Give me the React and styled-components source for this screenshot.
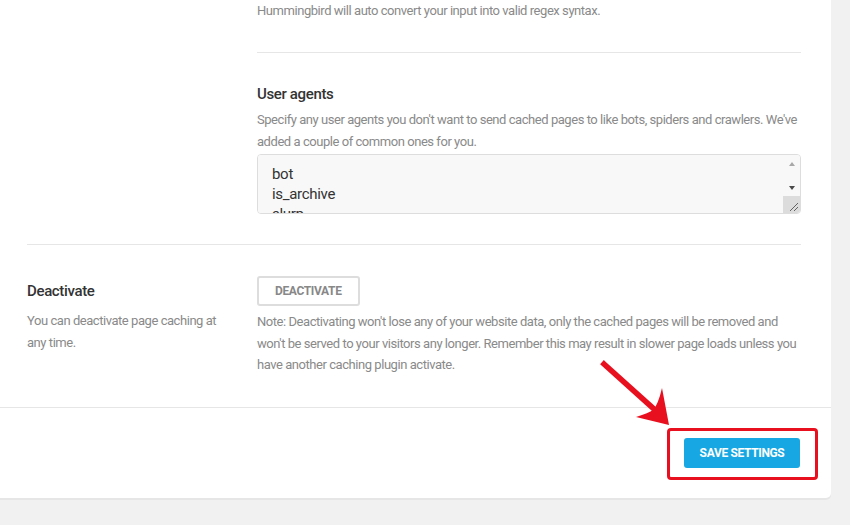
import React from "react";
import styled, { createGlobalStyle } from "styled-components";

const Global = createGlobalStyle`
  html, body { margin: 0; padding: 0; background: #f1f1f1; }
  body { font-family: Roboto, "Liberation Sans", sans-serif; -webkit-font-smoothing: antialiased; }
  * { box-sizing: border-box; }
`;

const Page = styled.div`
  width: 850px;
  height: 525px;
  overflow: hidden;
  background: #f1f1f1;
`;

const Card = styled.div`
  width: 831px;
  background: #fff;
  border-radius: 0 0 5px 0;
  box-shadow: 0 2px 0 #e6e6e6;
`;

const Body = styled.div`
  padding: 0 30px 0 27px;
`;

const Row = styled.div`
  display: grid;
  grid-template-columns: 230px 1fr;
  padding: ${(p) => p.$pad || "0"};
  border-bottom: ${(p) => (p.$divider ? "1px solid #e6e6e6" : "none")};
`;

const Col = styled.div`
  display: flex;
  flex-direction: column;
  align-items: flex-start;
  padding-right: ${(p) => p.$pr || "0"};
`;

const Text = styled.p`
  margin: ${(p) => p.$m || "0"};
  font-size: 13px;
  letter-spacing: -0.45px;
  line-height: ${(p) => p.$lh || "22px"};
  color: #8a8a8a;
  width: 100%;
`;

const InnerDivider = styled.hr`
  width: 100%;
  margin: 30px 0 30px;
  border: 0;
  border-top: 1px solid #e6e6e6;
`;

const Heading = styled.h4`
  margin: 0 0 4px;
  font-size: 15px;
  font-weight: 500;
  letter-spacing: -0.35px;
  line-height: ${(p) => p.$lh || "22px"};
  color: #333;
`;

const AreaWrap = styled.div`
  position: relative;
  width: 100%;
  margin: 1px 0 30px;
`;

const Area = styled.textarea`
  display: block;
  width: 100%;
  height: 60px;
  padding: 9px 30px 9px 14px;
  background: #f8f8f8;
  border: 1px solid #ddd;
  border-radius: 4px;
  font-family: Roboto, "Liberation Sans", sans-serif;
  font-size: 15px;
  letter-spacing: -0.3px;
  line-height: 20px;
  color: #333;
  resize: vertical;
  outline: none;
  scrollbar-width: none;
`;

const Rail = styled.div`
  position: absolute;
  top: 1px;
  right: 1px;
  bottom: 1px;
  width: 17px;
  display: flex;
  flex-direction: column;
  pointer-events: none;
  border-radius: 0 3px 3px 0;
  overflow: hidden;
`;

const RailButton = styled.div`
  height: 17px;
  display: flex;
  align-items: center;
  justify-content: center;
  margin-top: ${(p) => (p.$down ? "auto" : "0")};
`;

const Tri = styled.span`
  width: 0;
  height: 0;
  border-left: 3.5px solid transparent;
  border-right: 3.5px solid transparent;
  border-bottom: ${(p) => (p.$down ? "0" : "4px solid #a8a8a8")};
  border-top: ${(p) => (p.$down ? "4px solid #4a4a4a" : "0")};
`;

const Corner = styled.div`
  height: 17px;
  background: #dcdcdc;
  display: flex;
  align-items: flex-end;
  justify-content: flex-end;
  padding: 0 2px 2px 0;
`;

const GhostButton = styled.button`
  height: 30px;
  padding: 0 16px;
  background: #fff;
  border: 2px solid #ddd;
  border-radius: 3px;
  font-family: Roboto, "Liberation Sans", sans-serif;
  font-size: 12px;
  font-weight: 700;
  letter-spacing: -0.35px;
  color: #888;
  text-transform: uppercase;
  cursor: pointer;
`;

const FooterBar = styled.div`
  display: flex;
  justify-content: flex-end;
  padding: 30px 31px 30px 0;
  border-top: 1px solid #e6e6e6;
`;

const SaveWrap = styled.div`
  position: relative;
`;

const PrimaryButton = styled.button`
  height: 30px;
  width: 116px;
  padding: 0;
  background: #17a8e3;
  border: 0;
  border-radius: 3px;
  font-family: Roboto, "Liberation Sans", sans-serif;
  font-size: 12px;
  font-weight: 700;
  letter-spacing: -0.35px;
  color: #fff;
  text-transform: uppercase;
  cursor: pointer;
`;

const Highlight = styled.div`
  position: absolute;
  left: -17px;
  top: -10px;
  right: -18px;
  bottom: -12px;
  border: 3px solid #e8101f;
  border-radius: 4px;
  pointer-events: none;
`;

const Arrow = styled.svg`
  position: absolute;
  left: -84px;
  top: -78px;
  width: 72px;
  height: 68px;
  overflow: visible;
  pointer-events: none;
`;

export default function App() {
  return (
    <Page>
      <Global />
      <Card>
        <Body>
          <Row $divider>
            <div />
            <Col>
              <Text>Hummingbird will auto convert your input into valid regex syntax.</Text>
              <InnerDivider />
              <Heading>User agents</Heading>
              <Text>
                Specify any user agents you don't want to send cached pages to like bots, spiders and crawlers. We've
                added a couple of common ones for you.
              </Text>
              <AreaWrap>
                <Area
                  defaultValue={"bot\nis_archive\nslurp\ncrawl\nspider\nYandex"}
                  spellCheck={false}
                />
                <Rail>
                  <RailButton>
                    <Tri />
                  </RailButton>
                  <RailButton $down>
                    <Tri $down />
                  </RailButton>
                  <Corner>
                    <svg width="9" height="9" viewBox="0 0 9 9">
                      <line x1="1" y1="9" x2="9" y2="1" stroke="#555" strokeWidth="0.9" />
                      <line x1="5" y1="9" x2="9" y2="5" stroke="#555" strokeWidth="0.9" />
                    </svg>
                  </Corner>
                </Rail>
              </AreaWrap>
            </Col>
          </Row>
          <Row $pad="31px 0 31px">
            <Col $pr="20px">
              <Heading $lh="30px">Deactivate</Heading>
              <Text $lh="21.5px">You can deactivate page caching at any time.</Text>
            </Col>
            <Col>
              <GhostButton>Deactivate</GhostButton>
              <Text $lh="21.5px" $m="5px 0 0">
                Note: Deactivating won't lose any of your website data, only the cached pages will be removed and
                won't be served to your visitors any longer. Remember this may result in slower page loads unless you
                have another caching plugin activate.
              </Text>
            </Col>
          </Row>
        </Body>
        <FooterBar>
          <SaveWrap>
            <Arrow viewBox="0 0 72 68">
              <line x1="4" y1="4" x2="54" y2="49" stroke="#e8101f" strokeWidth="5.5" strokeLinecap="square" />
              <path d="M69 65 L36 57 Q49 53 53 50 Q58 45 62 28 Z" fill="#e8101f" />
            </Arrow>
            <PrimaryButton>Save Settings</PrimaryButton>
            <Highlight />
          </SaveWrap>
        </FooterBar>
      </Card>
    </Page>
  );
}
